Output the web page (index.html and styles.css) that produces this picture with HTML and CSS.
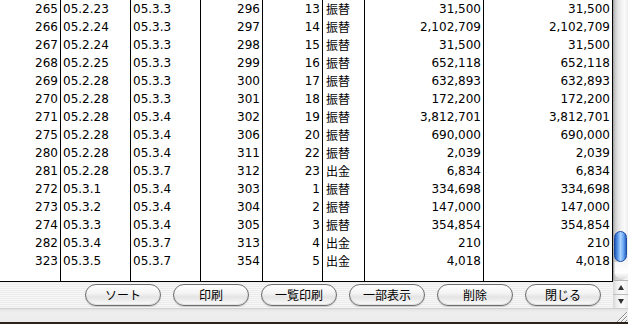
FILE: index.html
```html
<!DOCTYPE html>
<html lang="ja">
<head>
<meta charset="utf-8">
<title>一覧</title>
<link rel="stylesheet" href="styles.css">
</head>
<body>
<div class="window">
  <div class="main">
    <div class="content">
      <div class="grid">
        <div class="c r">265</div><div class="c l">05.2.23</div><div class="c l">05.3.3</div><div class="c r">296</div><div class="c r">13</div><div class="c l">振替</div><div class="c r">31,500</div><div class="c r">31,500</div>
        <div class="c r">266</div><div class="c l">05.2.24</div><div class="c l">05.3.3</div><div class="c r">297</div><div class="c r">14</div><div class="c l">振替</div><div class="c r">2,102,709</div><div class="c r">2,102,709</div>
        <div class="c r">267</div><div class="c l">05.2.24</div><div class="c l">05.3.3</div><div class="c r">298</div><div class="c r">15</div><div class="c l">振替</div><div class="c r">31,500</div><div class="c r">31,500</div>
        <div class="c r">268</div><div class="c l">05.2.25</div><div class="c l">05.3.3</div><div class="c r">299</div><div class="c r">16</div><div class="c l">振替</div><div class="c r">652,118</div><div class="c r">652,118</div>
        <div class="c r">269</div><div class="c l">05.2.28</div><div class="c l">05.3.3</div><div class="c r">300</div><div class="c r">17</div><div class="c l">振替</div><div class="c r">632,893</div><div class="c r">632,893</div>
        <div class="c r">270</div><div class="c l">05.2.28</div><div class="c l">05.3.3</div><div class="c r">301</div><div class="c r">18</div><div class="c l">振替</div><div class="c r">172,200</div><div class="c r">172,200</div>
        <div class="c r">271</div><div class="c l">05.2.28</div><div class="c l">05.3.4</div><div class="c r">302</div><div class="c r">19</div><div class="c l">振替</div><div class="c r">3,812,701</div><div class="c r">3,812,701</div>
        <div class="c r">275</div><div class="c l">05.2.28</div><div class="c l">05.3.4</div><div class="c r">306</div><div class="c r">20</div><div class="c l">振替</div><div class="c r">690,000</div><div class="c r">690,000</div>
        <div class="c r">280</div><div class="c l">05.2.28</div><div class="c l">05.3.4</div><div class="c r">311</div><div class="c r">22</div><div class="c l">振替</div><div class="c r">2,039</div><div class="c r">2,039</div>
        <div class="c r">281</div><div class="c l">05.2.28</div><div class="c l">05.3.7</div><div class="c r">312</div><div class="c r">23</div><div class="c l">出金</div><div class="c r">6,834</div><div class="c r">6,834</div>
        <div class="c r">272</div><div class="c l">05.3.1</div><div class="c l">05.3.4</div><div class="c r">303</div><div class="c r">1</div><div class="c l">振替</div><div class="c r">334,698</div><div class="c r">334,698</div>
        <div class="c r">273</div><div class="c l">05.3.2</div><div class="c l">05.3.4</div><div class="c r">304</div><div class="c r">2</div><div class="c l">振替</div><div class="c r">147,000</div><div class="c r">147,000</div>
        <div class="c r">274</div><div class="c l">05.3.3</div><div class="c l">05.3.4</div><div class="c r">305</div><div class="c r">3</div><div class="c l">振替</div><div class="c r">354,854</div><div class="c r">354,854</div>
        <div class="c r">282</div><div class="c l">05.3.4</div><div class="c l">05.3.7</div><div class="c r">313</div><div class="c r">4</div><div class="c l">出金</div><div class="c r">210</div><div class="c r">210</div>
        <div class="c r">323</div><div class="c l">05.3.5</div><div class="c l">05.3.7</div><div class="c r">354</div><div class="c r">5</div><div class="c l">出金</div><div class="c r">4,018</div><div class="c r">4,018</div>
        <div class="c"></div><div class="c"></div><div class="c"></div><div class="c"></div><div class="c"></div><div class="c"></div><div class="c"></div><div class="c"></div>
      </div>
      <div class="buttonbar">
        <button class="btn">ソート</button>
        <button class="btn">印刷</button>
        <button class="btn">一覧印刷</button>
        <button class="btn">一部表示</button>
        <button class="btn">削除</button>
        <button class="btn">閉じる</button>
      </div>
    </div>
    <div class="vscroll">
      <div class="track">
        <div class="thumb"></div>
        <div class="trackend"></div>
      </div>
      <div class="arrows">
        <div class="arrowbtn"><span class="tri up"></span></div>
        <div class="arrowbtn"><span class="tri down"></span></div>
      </div>
    </div>
  </div>
  <div class="statusbar">
    <div class="grip">
      <svg width="15" height="14" viewBox="0 0 15 14">
        <line x1="4" y1="13" x2="14" y2="3" stroke="#8a8a8a" stroke-width="1"/>
        <line x1="8" y1="13" x2="14" y2="7" stroke="#8a8a8a" stroke-width="1"/>
        <line x1="12" y1="13" x2="14" y2="11" stroke="#8a8a8a" stroke-width="1"/>
        <line x1="5" y1="13" x2="15" y2="3" stroke="#ffffff" stroke-width="1"/>
        <line x1="9" y1="13" x2="15" y2="7" stroke="#ffffff" stroke-width="1"/>
      </svg>
    </div>
  </div>
  <div class="desk"></div>
</div>
</body>
</html>
```
FILE: styles.css
```css
html, body {
  margin: 0;
  padding: 0;
  background: #1e1a16;
}
.window {
  width: 628px;
  height: 324px;
  display: flex;
  flex-direction: column;
  font-family: "DejaVu Sans", "Noto Sans CJK JP", sans-serif;
  font-size: 12px;
  color: #000;
}
.main {
  display: flex;
  height: 308px;
}
.content {
  width: 613px;
  display: flex;
  flex-direction: column;
}
.grid {
  display: grid;
  grid-template-columns: 61px 70px 70px 62px 60px 42px 119px 129px;
  grid-template-rows: repeat(15, 18px) 11px;
  height: 282px;
  box-sizing: border-box;
  border-bottom: 1px solid #000;
  background: #fff;
}
.c {
  box-sizing: border-box;
  border-right: 1px solid #000;
  line-height: 18px;
  white-space: nowrap;
  overflow: hidden;
}
.r {
  text-align: right;
  padding-right: 2px;
}
.l {
  text-align: left;
  padding-left: 2px;
}
.grid .c:nth-child(8n+6) {
  padding-left: 3px;
  font-family: "Noto Sans CJK JP", sans-serif;
}
.buttonbar {
  height: 26px;
  display: flex;
  align-items: center;
  gap: 12px;
  padding-left: 85px;
  background: repeating-linear-gradient(to bottom, #ececec 0, #ececec 1px, #f7f7f7 1px, #f7f7f7 2px);
}
.btn {
  width: 76px;
  height: 22px;
  padding: 0;
  margin: 0;
  border: 1px solid #6f6f6f;
  border-radius: 11px;
  background: linear-gradient(to bottom, #ffffff 0%, #f4f4f4 40%, #e4e4e4 60%, #f2f2f2 85%, #ffffff 100%);
  box-shadow: inset 0 -1px 1px rgba(0,0,0,0.12), 0 1px 1px rgba(0,0,0,0.15);
  font-family: "Noto Sans CJK JP", sans-serif;
  font-size: 12px;
  color: #000;
  line-height: 20px;
}
.vscroll {
  width: 15px;
  display: flex;
  flex-direction: column;
}
.track {
  height: 281px;
  display: flex;
  flex-direction: column;
  background: linear-gradient(to right, #9c9c9c 0, #c9c9c9 2px, #e4e4e4 5px, #f4f4f4 9px, #fbfbfb 12px, #ececec 15px);
}
.thumb {
  margin-top: auto;
  margin-left: 1px;
  width: 13px;
  height: 31px;
  box-sizing: border-box;
  border: 1px solid #1b4a9e;
  border-radius: 7px;
  background: linear-gradient(to right, #2458b8 0%, #5a98ec 25%, #a9d2ff 50%, #6eaaf3 75%, #2a62c4 100%);
}
.trackend {
  height: 18px;
  margin-left: 1px;
  border-radius: 0 0 7px 7px;
  background: linear-gradient(to bottom, #f7f7f7 0%, #ffffff 60%, #d8d8d8 100%);
  box-shadow: inset 1px 0 1px rgba(0,0,0,0.15);
}
.arrows {
  height: 27px;
  display: flex;
  flex-direction: column;
  border-top: 1px solid #b5b5b5;
}
.arrowbtn {
  flex: 1;
  display: flex;
  align-items: center;
  justify-content: center;
  background: linear-gradient(to right, #d6d6d6 0, #efefef 4px, #fafafa 10px, #ebebeb 15px);
}
.arrowbtn + .arrowbtn {
  border-top: 1px solid #bdbdbd;
}
.tri {
  width: 0;
  height: 0;
  border-left: 3px solid transparent;
  border-right: 3px solid transparent;
}
.tri.up {
  border-bottom: 5px solid #333;
}
.tri.down {
  border-top: 5px solid #333;
}
.statusbar {
  height: 14px;
  display: flex;
  justify-content: flex-end;
  background: linear-gradient(to bottom, #e2e2e2 0, #eeeeee 3px, #ececec 100%);
  border-top: 1px solid #d0d0d0;
  box-sizing: border-box;
}
.grip {
  width: 15px;
  height: 13px;
}
.grip svg {
  display: block;
}
.desk {
  height: 2px;
  background: #2a2119;
}
```
